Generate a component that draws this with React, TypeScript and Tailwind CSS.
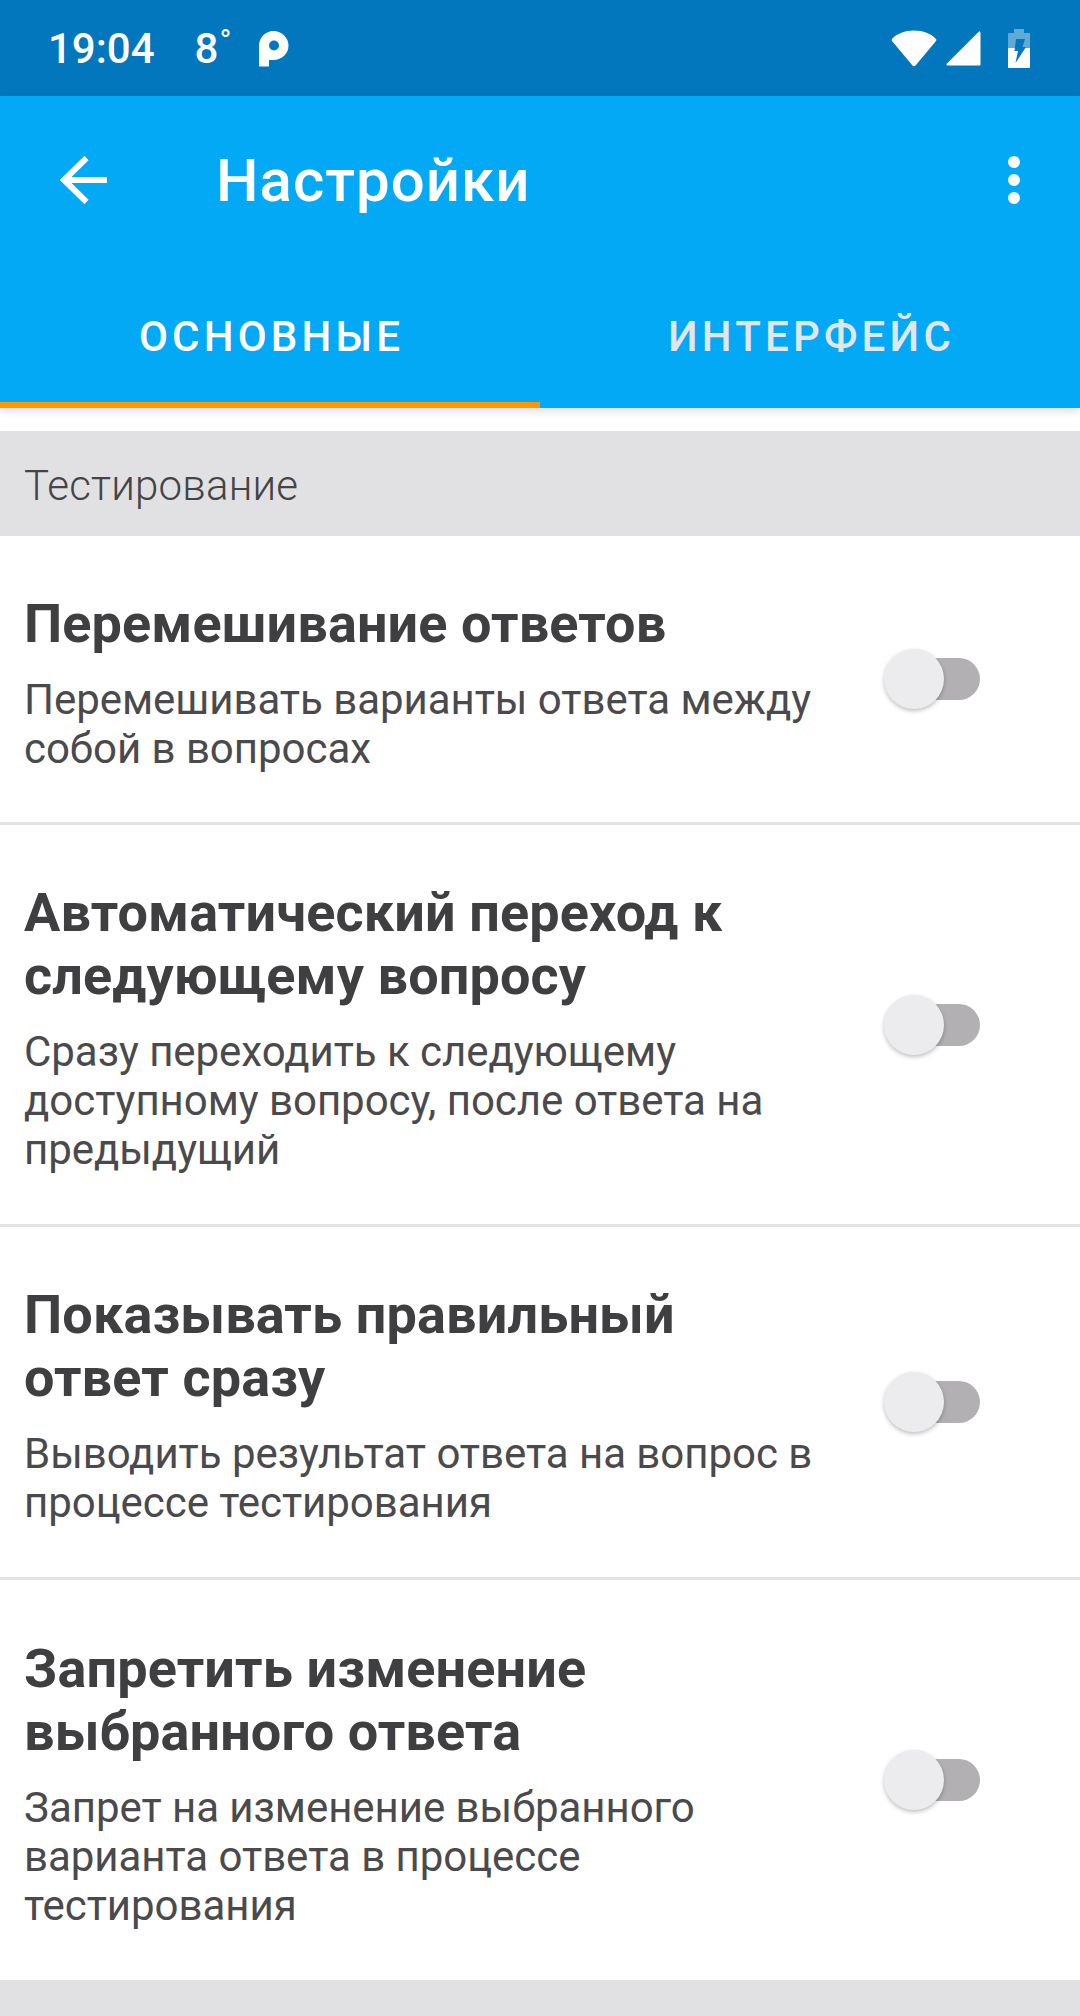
const settings = [
  {
    title: ["Перемешивание ответов"],
    desc: ["Перемешивать варианты ответа между", "собой в вопросах"],
    height: "h-[289px]",
  },
  {
    title: ["Автоматический переход к", "следующему вопросу"],
    desc: ["Сразу переходить к следующему", "доступному вопросу, после ответа на", "предыдущий"],
    height: "h-[402px]",
  },
  {
    title: ["Показывать правильный", "ответ сразу"],
    desc: ["Выводить результат ответа на вопрос в", "процессе тестирования"],
    height: "h-[353px]",
  },
  {
    title: ["Запретить изменение", "выбранного ответа"],
    desc: ["Запрет на изменение выбранного", "варианта ответа в процессе", "тестирования"],
    height: "h-[400px]",
  },
];

function StatusBar() {
  return (
    <div className="h-[96px] bg-[#0277bd] flex items-center pl-[48px] pr-[50px] text-white shrink-0">
      <span className="text-[42px] leading-none font-medium mt-[2px]">19:04</span>
      <span className="text-[42px] leading-none font-medium ml-[40px] mt-[2px]">8</span>
      <span className="text-[32px] leading-none mb-[14px] ml-[1px]">°</span>
      <svg width="32" height="38" viewBox="0 0 32 38" className="ml-[27px] mt-[2px]">
        <path
          d="M1 36.5V16C1 7.5 7.5 1 15.5 1S30.500 7.500 30.500 15.500 24 30 15.500 30H11V36.500Z"
          fill="#fff"
        />
        <circle cx="16" cy="15.500" r="5" fill="#0277bd" />
      </svg>
      <div className="ml-auto flex items-center">
        <svg width="46" height="37" viewBox="0 0 46 37">
          <path d="M1 9C6 3.500 14 0.500 23 0.500S40 3.500 45 9C45.500 9.800 45.400 10.500 45 11L24.500 35.500C23.700 36.500 22.300 36.500 21.500 35.500L1 11C0.600 10.500 0.500 9.800 1 9Z" fill="#fff" />
        </svg>
        <svg width="35" height="35" viewBox="0 0 35 35" className="ml-[9px]">
          <path d="M33 0.500C34 0.200 34.500 1 34.500 2V33C34.500 34 34 34.500 33 34.500H2C0.500 34.500 0 33.500 1 32.500Z" fill="#fff" />
        </svg>
        <svg width="22" height="39" viewBox="0 0 22 39" className="ml-[27px]">
          <path d="M6 0H16V4H21C21.600 4 22 4.400 22 5V19H0V5C0 4.400 0.400 4 1 4H6Z" fill="#fff" fillOpacity="0.38" />
          <path d="M0 19H22V38C22 38.600 21.600 39 21 39H1C0.400 39 0 38.600 0 38Z" fill="#fff" />
          <path d="M8 10H17L14.500 18H18L7.500 34L10 22H6.500Z" fill="#0277bd" />
        </svg>
      </div>
    </div>
  );
}

function AppBar() {
  return (
    <div className="bg-[#03a9f4] shrink-0 relative z-10 shadow-[0_3px_8px_rgba(0,0,0,0.14)]">
      <div className="h-[168px] flex items-center pl-[60px] pr-[60px] text-white">
        <svg width="48" height="48" viewBox="0 0 48 48" className="shrink-0">
          <path d="M47 24H4M26.500 2L4 24L26.500 46" fill="none" stroke="#fff" strokeWidth="6" />
        </svg>
        <span className="ml-[108px] mt-[2px] text-[60px] leading-none font-medium tracking-[1px]">Настройки</span>
        <div className="ml-auto flex flex-col gap-[6px]">
          <div className="w-[12px] h-[12px] rounded-full bg-white" />
          <div className="w-[12px] h-[12px] rounded-full bg-white" />
          <div className="w-[12px] h-[12px] rounded-full bg-white" />
        </div>
      </div>
      <div className="flex h-[144px]">
        <div className="w-1/2 flex items-center justify-center text-[42px] font-medium tracking-[4.200px] text-white border-b-[6px] border-[#ff9800] pt-[6px] pl-[3px]">
          ОСНОВНЫЕ
        </div>
        <div className="w-1/2 flex items-center justify-center text-[42px] font-medium tracking-[4.200px] text-[#e3e6e8] border-b-[6px] border-transparent pt-[6px] pl-[3px]">
          ИНТЕРФЕЙС
        </div>
      </div>
    </div>
  );
}

function Toggle() {
  return (
    <div className="relative w-[96px] h-[60px] shrink-0">
      <div className="absolute right-0 top-[9px] w-[78px] h-[42px] rounded-full bg-[#b2b0b2]" />
      <div className="absolute left-0 top-0 w-[60px] h-[60px] rounded-full bg-[#ececee] shadow-[0_2px_4px_rgba(0,0,0,0.25)]" />
    </div>
  );
}

export default function App() {
  return (
    <div className="w-[1080px] h-[2016px] overflow-hidden bg-white flex flex-col font-['Roboto',sans-serif]">
      <StatusBar />
      <AppBar />

      <div className="h-[23px] shrink-0" />

      {/* Section header */}
      <div className="h-[105px] bg-[#e1e1e3] flex items-center pl-[24px] pt-[3px] shrink-0 text-[42px] font-light tracking-[0.200px] text-[#444446]">
        Тестирование
      </div>

      {settings.map((item, i) => (
        <div
          key={i}
          className={`${item.height} shrink-0 flex items-center justify-between pl-[24px] pr-[100px] ${
            i < settings.length - 1 ? "border-b-[3px] border-[#e3e3e5]" : ""
          }`}
        >
          <div className="whitespace-nowrap pt-[6px]">
            {item.title.map((line) => (
              <div key={line} className="text-[54px] leading-[63px] font-bold tracking-[0.120px] text-[#3f3f41]">
                {line}
              </div>
            ))}
            <div className="mt-[20px]">
              {item.desc.map((line) => (
                <div key={line} className="text-[42px] leading-[49px] tracking-[-0.040px] text-[#4a4a4c]">
                  {line}
                </div>
              ))}
            </div>
          </div>
          <Toggle />
        </div>
      ))}

      <div className="flex-1 bg-[#e1e1e3]" />
    </div>
  );
}
